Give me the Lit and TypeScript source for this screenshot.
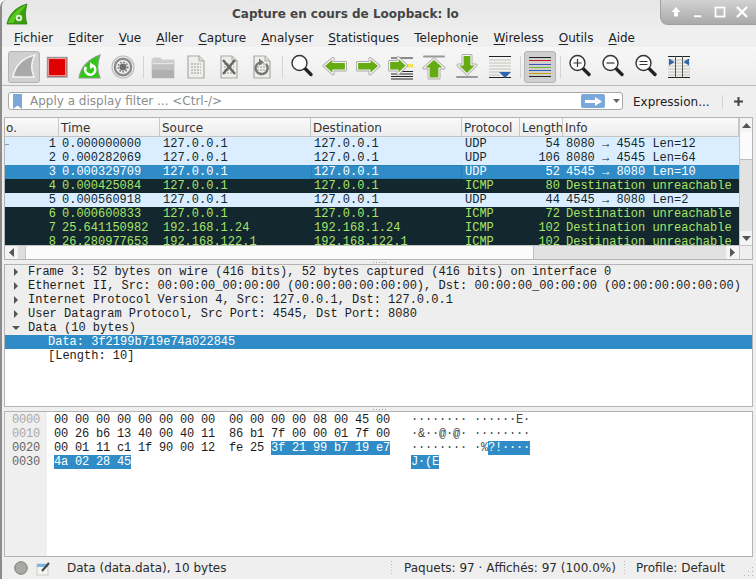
import { LitElement, css, html, svg } from 'lit';
import { customElement } from 'lit/decorators.js';

type PacketRow = [string, string, string, string, string, string, string, string];

const MENUS: [string, string, string][] = [
    ['', 'F', 'ichier'],
    ['', 'E', 'diter'],
    ['', 'V', 'ue'],
    ['', 'A', 'ller'],
    ['', 'C', 'apture'],
    ['', 'A', 'nalyser'],
    ['', 'S', 'tatistiques'],
    ['Telephon', 'i', 'e'],
    ['', 'W', 'ireless'],
    ['', 'O', 'utils'],
    ['', 'A', 'ide'],
];

const COLUMNS = ['o.', 'Time', 'Source', 'Destination', 'Protocol', 'Length', 'Info'];

const PACKETS: PacketRow[] = [
    ['light', '1', '0.000000000', '127.0.0.1', '127.0.0.1', 'UDP', '54', '8080 → 4545 Len=12'],
    ['light', '2', '0.000282069', '127.0.0.1', '127.0.0.1', 'UDP', '106', '8080 → 4545 Len=64'],
    ['selected', '3', '0.000329709', '127.0.0.1', '127.0.0.1', 'UDP', '52', '4545 → 8080 Len=10'],
    ['dark', '4', '0.000425084', '127.0.0.1', '127.0.0.1', 'ICMP', '80', 'Destination unreachable'],
    ['light', '5', '0.000560918', '127.0.0.1', '127.0.0.1', 'UDP', '44', '4545 → 8080 Len=2'],
    ['dark', '6', '0.000600833', '127.0.0.1', '127.0.0.1', 'ICMP', '72', 'Destination unreachable'],
    ['dark', '7', '25.641150982', '192.168.1.24', '192.168.1.24', 'ICMP', '102', 'Destination unreachable'],
    ['dark', '8', '26.280977653', '192.168.122.1', '192.168.122.1', 'ICMP', '102', 'Destination unreachable'],
];

const DETAILS: [string, string][] = [
    ['closed', 'Frame 3: 52 bytes on wire (416 bits), 52 bytes captured (416 bits) on interface 0'],
    ['closed', 'Ethernet II, Src: 00:00:00_00:00:00 (00:00:00:00:00:00), Dst: 00:00:00_00:00:00 (00:00:00:00:00:00)'],
    ['closed', 'Internet Protocol Version 4, Src: 127.0.0.1, Dst: 127.0.0.1'],
    ['closed', 'User Datagram Protocol, Src Port: 4545, Dst Port: 8080'],
    ['open', 'Data (10 bytes)'],
];

const page = (extra = svg``) => svg`
    <path d="M4 1H15L20 6V23H4Z" fill="#eeeeea" stroke="#aaa" stroke-width="1.2"/>
    <path d="M15 1V6H20" fill="#ddd" stroke="#aaa"/>
    <path d="M7 9H17M7 12H17M7 15H17M7 18H17" stroke="#b4b4b4" stroke-width="1.6" stroke-dasharray="2 1"/>
    ${extra}`;

const greenShape = (d: string) => svg`
    <path d=${d} fill="none" stroke="#a9a9a9" stroke-width="3" stroke-linejoin="round"/>
    <path d=${d} fill="#66ab14" stroke="#f4f4f4" stroke-width="1.2" stroke-linejoin="round"/>`;

// magnifier sits a little above the centre of its box
const lens = (inner = svg``) => svg`
    <g transform="translate(0 -1.500)">
        <path d="M14 14L21 21" stroke="#222" stroke-width="3.4" stroke-linecap="round"/>
        <circle cx="9.5" cy="9.5" r="7.5" fill="#fbfbfb" stroke="#333" stroke-width="1.4"/>
        ${inner}
    </g>`;

const ICONS = {
    fin: svg`<path d="M1 22C3 11 11 3 23 0C19 7 19 15 22 22Z" fill="#a9a9a9" stroke="#f2f2f2" stroke-width="1.6"/>`,
    stop: svg`<rect x="2.5" y="2.5" width="19.5" height="19.5" fill="#e00000" stroke="#999" stroke-width="1.4"/>
        <rect x="3.7" y="3.7" width="17" height="17" fill="none" stroke="#f3dada" stroke-width=".7"/>`,
    restart: svg`<path d="M1 23C3 12 11 4 22 0C19 8 19 16 22 23Z" fill="#2fc813" stroke="#8a9a88" stroke-width="1.2"/>
        <path d="M15 10.5A5 5 0 1 1 8 12" fill="none" stroke="#fff" stroke-width="2.6"/>
        <path d="M12 7L17 11L12 14Z" fill="#fff"/>`,
    options: svg`<circle cx="12" cy="12" r="11" fill="#f6f6f6" stroke="#bbb" stroke-width="1.2"/>
        <circle cx="12" cy="12" r="8.2" fill="#f0f0f0" stroke="#8a8a8a" stroke-width="2.4"/>
        <circle cx="12" cy="12" r="3.6" fill="#6f6f6f"/>
        <circle cx="12" cy="12" r="4.8" fill="none" stroke="#6f6f6f" stroke-width="1.4" stroke-dasharray="1.6 1.6"/>`,
    folder: svg`<path d="M1 5C1 4 2 3 3 3H9L11 5H23V23H1Z" fill="#cdcdcd" stroke="#d0d0d0"/>
        <rect x="1" y="8" width="22" height="8" fill="#c0c0c0"/>
        <rect x="1" y="15" width="22" height="8" fill="#b0b0b0"/>
        <rect x="1.5" y="8" width="21" height="1.2" fill="#e6e6e6"/>`,
    file: page(),
    close: page(svg`<path d="M6 5L18 19M18 5L6 19" stroke="#666" stroke-width="2.4"/>`),
    reload: page(svg`<path d="M16 9A6 6 0 1 1 9.5 7.5" fill="none" stroke="#777" stroke-width="2.4"/><path d="M9 3.5L14 7.5L9 10.5Z" fill="#777"/>`),
    search: lens(),
    back: greenShape('M1 11L10 3.5V7.5H22.5V15H10V19Z'),
    forward: greenShape('M23 11L14 3.5V7.5H1.5V15H14V19Z'),
    goto: svg`<path d="M2 3H24M2 19H24M2 21.5H24M2 24H24M10 16.5H24" stroke="#222" stroke-width="1"/>
        <rect x="16" y="9" width="8" height="3.5" fill="#f4e84e"/>
        ${greenShape('M17.5 10.5L9 2.5V6.5H0.5V15H9V19Z')}`,
    first: svg`<path d="M2 1.5H22" stroke="#999" stroke-width="2" stroke-linecap="round"/>
        ${greenShape('M12 4L22 13H17V23H7V13H2Z')}`,
    last: svg`<path d="M2 22H22" stroke="#999" stroke-width="2" stroke-linecap="round"/>
        ${greenShape('M12 19L21 10H16V0.5H8V10H3Z')}`,
    autoscroll: svg`<path d="M1 1.5H23M1 22.5H23" stroke="#222" stroke-width="1.2"/>
        <path d="M1 5H23M1 8H23M1 11H23M1 14H23M1 17H23M1 20H12" stroke="#c2c2b8" stroke-width="1"/>
        <path d="M11 17H23L17 23Z" fill="#2c66ac"/>`,
    colorize: svg`<path d="M1 2.500H23" stroke="#222"/><path d="M1 5.500H23" stroke="#c62020"/>
        <path d="M1 9.500H23" stroke="#3c57b5"/><path d="M1 12.500H23" stroke="#6fb52c"/>
        <path d="M1 15.500H23" stroke="#2b62b8"/><path d="M1 18.500H23" stroke="#c9a000"/>
        <path d="M1 21.500H23" stroke="#222"/>`,
    zoomIn: lens(svg`<path d="M5.500 9.500H13.500M9.500 5.500V13.500" stroke="#333" stroke-width="1.2"/>`),
    zoomOut: lens(svg`<path d="M5.500 9.500H13.500" stroke="#333" stroke-width="1.2"/>`),
    zoomReset: lens(svg`<path d="M5.500 8H13.500M5.500 11H13.500" stroke="#333" stroke-width="1.2"/>`),
    resize: svg`<path d="M1 1.500H23M1 22.500H23" stroke="#222" stroke-width="1.2"/>
        <path d="M1 5H23M1 8H23M1 11H23M1 14H23M1 17H23M1 20H23" stroke="#c2c2b8"/>
        <path d="M8.500 1V23M15.500 1V23" stroke="#555"/>
        <path d="M2 3.500L7.500 7L2 10.500Z" fill="#2c66ac"/><path d="M22 3.500L16.500 7L22 10.500Z" fill="#2c66ac"/>`,
};

type IconName = keyof typeof ICONS;

const TOOL_GROUPS: { name: IconName; active?: boolean }[][] = [
    [{ name: 'fin', active: true }, { name: 'stop' }, { name: 'restart' }, { name: 'options' }],
    [{ name: 'folder' }, { name: 'file' }, { name: 'close' }, { name: 'reload' }],
    [{ name: 'search' }, { name: 'back' }, { name: 'forward' }, { name: 'goto' }, { name: 'first' }, { name: 'last' }, { name: 'autoscroll' }],
    [{ name: 'colorize', active: true }],
    [{ name: 'zoomIn' }, { name: 'zoomOut' }, { name: 'zoomReset' }, { name: 'resize' }],
];

const HEX: [string, string, string, string, string, string][] = [
    ['0000', '00 00 00 00 00 00 00 00  00 00 00 00 08 00 45 00', '', '········ ······E·', '', 'dim'],
    ['0010', '00 26 b6 13 40 00 40 11  86 b1 7f 00 00 01 7f 00', '', '·&··@·@· ········', '', 'dim'],
    ['0020', '00 01 11 c1 1f 90 00 12  fe 25 ', '3f 21 99 b7 19 e7', '········ ·%', '?!····', ''],
    ['0030', '', '4a 02 28 45', '', 'J·(E', ''],
];

@customElement('app-root')
export class AppRoot extends LitElement {
    static override styles = css`
        :host {
            display: block;
            width: 756px;
            height: 579px;
            overflow: hidden;
            font-family: 'DejaVu Sans', sans-serif;
            font-size: 12px;
            color: #2c2c2c;
        }
        .window {
            box-sizing: border-box;
            width: 756px;
            height: 579px;
            display: flex;
            flex-direction: column;
            background: #efefef;
            border-left: 2px solid #8c8c8c;
            border-top-left-radius: 7px;
            overflow: hidden;
        }

        /* title bar */
        .titlebar {
            height: 27px;
            flex: none;
            display: flex;
            align-items: flex-start;
            background: linear-gradient(#e6e6e6, #ececec);
        }
        .logo {
            width: 22px;
            height: 22px;
            margin: 3px 0 0 4px;
            flex: none;
        }
        .title {
            margin: 7px 0 0 204px;
            flex: 1;
            font-weight: 700;
            font-size: 12px;
            color: #454545;
            white-space: nowrap;
        }
        .winctl {
            width: 96px;
            height: 25px;
            flex: none;
            display: flex;
            align-items: center;
            padding-left: 7px;
            gap: 6px;
            box-sizing: border-box;
            background: linear-gradient(#d2d2d2, #a9a9a9);
            border-bottom-left-radius: 8px;
            border: 1px solid #a0a0a0;
            border-width: 0 0 1px 1px;
        }
        .winctl svg { width: 16px; height: 16px; flex: none; }

        /* menu bar */
        .menubar {
            height: 20px;
            padding-top: 1px;
            box-sizing: border-box;
            flex: none;
            display: flex;
            gap: 15px;
            padding-left: 12px;
            align-items: center;
            color: #222;
            background: #efefef;
        }
        .menubar u { text-underline-offset: 2px; text-decoration-thickness: 1px; }

        /* toolbar */
        .toolbar {
            height: 39px;
            box-sizing: border-box;
            flex: none;
            display: flex;
            align-items: flex-start;
            padding: 4px 0 0 6px;
            background: linear-gradient(#f7f7f7, #ededed);
            border-bottom: 1px solid #b8b8b8;
        }
        .tool {
            width: 32px;
            height: 32px;
            box-sizing: border-box;
            margin-right: 1px;
            display: flex;
            align-items: center;
            justify-content: center;
            border: 1px solid transparent;
            border-radius: 3px;
        }
        .tool.active {
            background: #cfcfcf;
            border-color: #b4b4b4;
        }
        .tool svg { width: 24px; height: 24px; overflow: visible; }
        .sep {
            width: 1px;
            height: 22px;
            margin: 5px 3px 0;
            background: #d4d4d4;
            flex: none;
        }

        /* display filter */
        .filterbar {
            height: 31px;
            box-sizing: border-box;
            flex: none;
            display: flex;
            align-items: flex-start;
            padding: 6px 0 0 6px;
        }
        .filter {
            width: 615px;
            height: 18px;
            box-sizing: border-box;
            flex: none;
            display: flex;
            align-items: center;
            background: #fff;
            border: 1px solid #a8a8a8;
            border-radius: 3px;
            padding-left: 4px;
        }
        .bookmark { width: 9px; height: 15px; flex: none; }
        .placeholder {
            flex: 1;
            margin-left: 8px;
            color: #8d8d8d;
            white-space: nowrap;
        }
        .apply {
            width: 24px;
            height: 14px;
            flex: none;
            background: #7ba8d8;
            border-radius: 2px;
            display: flex;
            align-items: center;
            justify-content: center;
        }
        .combo { width: 7px; height: 4px; margin: 0 2px 0 8px; flex: none; }
        .expression { margin-left: 10px; color: #222; width: 89px; line-height: 20px; flex: none; white-space: nowrap; }
        .filterbar .sep { height: 14px; margin: 3px 0 0 0; }
        .plus { margin-left: 9px; width: 13px; height: 13px; margin-top: 3px; flex: none; }

        /* framed panes */
        .pane {
            margin: 0 3px 0 2px;
            flex: none;
            background: #fff;
            border: 1px solid #b4b4b4;
            box-sizing: border-box;
            font-family: 'Liberation Mono', monospace;
            font-size: 12px;
            overflow: hidden;
        }
        .packets {
            height: 143px;
            display: grid;
            grid-template-columns: 734px 13px;
            grid-template-rows: 19px 108px 14px;
        }
        .head {
            grid-column: 1;
            grid-row: 1;
            display: grid;
            grid-template-columns: 54px 101px 151px 151px 58px 43px 176px;
            font-family: 'DejaVu Sans', sans-serif;
            font-size: 12px;
            background: linear-gradient(#fafafa, #ececec);
            border-bottom: 1px solid #c4c4c4;
            box-sizing: border-box;
        }
        .head div {
            border-right: 1px solid #c8c8c8;
            padding: 3px 0 0 2px;
            overflow: hidden;
            white-space: nowrap;
            color: #333;
        }
        .head div:first-child { padding-left: 1px; }
        .rows { grid-column: 1; grid-row: 2; overflow: hidden; }
        .row {
            height: 14px;
            line-height: 14px;
            display: grid;
            grid-template-columns: 54px 101px 151px 151px 58px 43px 176px;
            white-space: pre;
        }
        .row.light { background: #daeeff; color: #12272e; }
        .row.dark { background: #12272e; color: #a8e468; }
        .row.selected { background: #308cc6; color: #fff; }
        .row div { padding-left: 3px; overflow: hidden; }
        .row .num { padding: 0 3px 0 0; text-align: right; position: relative; }
        .row .focus { box-shadow: inset 0 0 0 1px #2a7cb2; }
        .tick {
            position: absolute;
            left: 0;
            top: 7px;
            width: 4px;
            height: 1px;
            background: #8c9aa2;
        }

        .vbar {
            grid-column: 2;
            grid-row: 1 / 3;
            background: #e2e2e2;
            border-left: 1px solid #c4c4c4;
            display: flex;
            flex-direction: column;
        }
        .vbar .btn { height: 14px; flex: none; background: #f4f4f4; display: flex; align-items: center; justify-content: center; }
        .vbar .thumb { height: 27px; flex: none; background: #fbfbfb; border-bottom: 1px solid #bdbdbd; }
        .vbar .track { flex: 1; }
        .hbar {
            grid-column: 1;
            grid-row: 3;
            display: flex;
            background: #e2e2e2;
            border-top: 1px solid #c4c4c4;
            box-sizing: border-box;
        }
        .hbar .btn { width: 13px; flex: none; background: #f4f4f4; display: flex; align-items: center; justify-content: center; }
        .hbar .stub { width: 7px; flex: none; background: #dedede; border-right: 1px solid #c4c4c4; }
        .hbar .thumb { width: 507px; flex: none; background: #fbfbfb; border-right: 1px solid #bdbdbd; }
        .hbar .track { flex: 1; }
        .corner { grid-column: 2; grid-row: 3; background: #efefef; border-top: 1px solid #c4c4c4; border-left: 1px solid #c4c4c4; }

        .grip {
            height: 4px;
            flex: none;
            display: flex;
            justify-content: center;
            align-items: center;
        }
        .grip span {
            width: 13px;
            height: 1px;
            background: repeating-linear-gradient(90deg, #a0a0a0 0 1px, transparent 1px 3px);
        }

        .details { height: 143px; }
        .node {
            height: 14px;
            line-height: 14px;
            padding-left: 23px;
            white-space: nowrap;
            overflow: hidden;
            background: #eeeeee;
            position: relative;
            color: #1c1c1c;
        }
        .leaf { background: #fff; padding-left: 43px; }
        .leaf.selected { background: #308cc6; color: #fff; }
        .arrow { position: absolute; left: 7px; top: 3px; width: 8px; height: 8px; }

        .bytes {
            height: 146px;
            display: flex;
            color: #1c1c1c;
            letter-spacing: -0.2px;
        }
        .gutter {
            width: 42px;
            flex: none;
            background: #efefef;
            padding: 1px 0 0 7px;
            box-sizing: border-box;
        }
        .gutter div { height: 14px; line-height: 14px; color: #666; }
        .gutter div.dim { color: #aaa; }
        .dump { padding: 1px 0 0 7px; flex: 1; }
        .line { height: 14px; line-height: 14px; display: flex; white-space: pre; }
        .hex { width: 357px; flex: none; }
        .mark { background: #308cc6; color: #fff; }
        .ascii { color: #444; }

        /* status bar */
        .status {
            flex: 1;
            display: flex;
            align-items: center;
            position: relative;
            color: #2c2c2c;
        }
        .led { width: 14px; height: 14px; margin-left: 12px; flex: none; }
        .note { width: 15px; height: 15px; margin-left: 8px; flex: none; }
        .field { margin-left: 16px; width: 324px; flex: none; white-space: nowrap; }
        .dots {
            width: 1px;
            height: 14px;
            flex: none;
            background: repeating-linear-gradient(#bdbdbd 0 1px, transparent 1px 3px);
        }
        .counts { margin: 0 8px 0 12px; width: 212px; flex: none; white-space: nowrap; }
        .profile { margin-left: 11px; white-space: nowrap; }
        .sizegrip { position: absolute; right: 2px; bottom: 2px; width: 11px; height: 11px; }
    `;

    private _renderMenu() {
        return MENUS.map(([before, key, after]) => html`<span>${before}<u>${key}</u>${after}</span>`);
    }

    private _renderToolbar() {
        return TOOL_GROUPS.map((group, index) => html`
            ${index > 0 ? html`<div class="sep"></div>` : ''}
            ${group.map(tool => html`
                <div class="tool ${tool.active ? 'active' : ''}">
                    <svg viewBox="0 0 24 24">${ICONS[tool.name]}</svg>
                </div>
            `)}
        `);
    }

    private _renderPacket(row: PacketRow, index: number) {
        const [kind, no, time, src, dst, proto, len, info] = row;
        return html`
            <div class="row ${kind}">
                <div class="num">${index === 0 ? html`<span class="tick"></span>` : ''}${no}</div>
                <div>${time}</div>
                <div>${src}</div>
                <div class=${kind === 'selected' ? 'focus' : ''}>${dst}</div>
                <div>${proto}</div>
                <div class="num">${len}</div>
                <div>${info}</div>
            </div>
        `;
    }

    override render() {
        return html`
            <div class="window">
                <div class="titlebar">
                    <svg class="logo" viewBox="0 0 22 22">
                        <path d="M1 21C3 11 10 4 21 1C19 8 19 15 21 21Z" fill="#3a9f10" stroke="#2d7c10" stroke-width=".8"/>
                        <path d="M2 20C5 12 11 6 20 2C18 6 13 10 7 20Z" fill="#56c81e"/>
                        <circle cx="13" cy="15" r="3.200" fill="#dff3d2"/>
                        <circle cx="13" cy="15" r="1.300" fill="#3a9f10"/>
                    </svg>
                    <div class="title">Capture en cours de Loopback: lo</div>
                    <div class="winctl">
                        <svg viewBox="0 0 16 16"><path d="M8 3L12.500 8H10V12.500H6V8H3.500Z" fill="#fff"/></svg>
                        <svg viewBox="0 0 16 16"><rect x="3.500" y="11" width="8" height="2.500" fill="#fff" stroke="#999" stroke-width=".4"/></svg>
                        <svg viewBox="0 0 16 16"><rect x="3.500" y="3.500" width="9" height="9" fill="none" stroke="#fff" stroke-width="1.800"/></svg>
                        <svg viewBox="0 0 16 16"><path d="M3 3L13 13M13 3L3 13" stroke="#fff" stroke-width="2.400"/></svg>
                    </div>
                </div>

                <div class="menubar">${this._renderMenu()}</div>
                <div class="toolbar">${this._renderToolbar()}</div>

                <div class="filterbar">
                    <div class="filter">
                        <svg class="bookmark" viewBox="0 0 9 15"><path d="M0 0H9V15L4.500 11.500L0 15Z" fill="#7ba8d8"/></svg>
                        <span class="placeholder">Apply a display filter ... &lt;Ctrl-/&gt;</span>
                        <div class="apply">
                            <svg width="17" height="9" viewBox="0 0 17 9"><path d="M0 3H10V0L17 4.500L10 9V6H0Z" fill="#fff"/></svg>
                        </div>
                        <svg class="combo" viewBox="0 0 7 4"><path d="M0 0H7L3.500 4Z" fill="#666"/></svg>
                    </div>
                    <span class="expression">Expression...</span>
                    <div class="sep"></div>
                    <svg class="plus" viewBox="0 0 13 13"><path d="M6.500 2V11M2 6.500H11" stroke="#444" stroke-width="2"/></svg>
                </div>

                <div class="pane packets">
                    <div class="head">${COLUMNS.map(c => html`<div>${c}</div>`)}</div>
                    <div class="vbar">
                        <div class="btn"><svg width="9" height="5" viewBox="0 0 9 5"><path d="M0 5H9L4.500 0Z" fill="#555"/></svg></div>
                        <div class="thumb"></div>
                        <div class="track"></div>
                        <div class="btn"><svg width="9" height="5" viewBox="0 0 9 5"><path d="M0 0H9L4.500 5Z" fill="#555"/></svg></div>
                    </div>
                    <div class="rows">${PACKETS.map((row, i) => this._renderPacket(row, i))}</div>
                    <div class="hbar">
                        <div class="btn"><svg width="5" height="9" viewBox="0 0 5 9"><path d="M5 0V9L0 4.500Z" fill="#555"/></svg></div>
                        <div class="stub"></div>
                        <div class="thumb"></div>
                        <div class="track"></div>
                        <div class="btn"><svg width="5" height="9" viewBox="0 0 5 9"><path d="M0 0V9L5 4.500Z" fill="#555"/></svg></div>
                    </div>
                    <div class="corner"></div>
                </div>

                <div class="grip"><span></span></div>

                <div class="pane details">
                    ${DETAILS.map(([state, text]) => html`
                        <div class="node">
                            <svg class="arrow" viewBox="0 0 8 8">
                                ${state === 'open'
                                    ? svg`<path d="M0 2H8L4 6Z" fill="#555"/>`
                                    : svg`<path d="M2 0V8L6 4Z" fill="#555"/>`}
                            </svg>${text}
                        </div>
                    `)}
                    <div class="node leaf selected">Data: 3f2199b719e74a022845</div>
                    <div class="node leaf">[Length: 10]</div>
                </div>

                <div class="grip"><span></span></div>

                <div class="pane bytes">
                    <div class="gutter">
                        ${HEX.map(line => html`<div class=${line[5]}>${line[0]}</div>`)}
                    </div>
                    <div class="dump">
                        ${HEX.map(line => html`
                            <div class="line">
                                <span class="hex">${line[1]}${line[2] ? html`<span class="mark">${line[2]}</span>` : ''}</span>
                                <span class="ascii">${line[3]}${line[4] ? html`<span class="mark">${line[4]}</span>` : ''}</span>
                            </div>
                        `)}
                    </div>
                </div>

                <div class="status">
                    <svg class="led" viewBox="0 0 14 14">
                        <circle cx="7" cy="7" r="6.300" fill="#a8a8a4" stroke="#7c7c7c" stroke-width="1"/>
                    </svg>
                    <svg class="note" viewBox="0 0 15 15">
                        <rect x="1" y="3" width="11" height="11" fill="#f4f4f0" stroke="#c4c4c4" stroke-width=".8"/>
                        <rect x="1" y="3" width="11" height="3" fill="#7cb4e4"/>
                        <path d="M6 10L13 2" stroke="#444" stroke-width="2"/>
                    </svg>
                    <span class="field">Data (data.data), 10 bytes</span>
                    <div class="dots"></div>
                    <span class="counts">Paquets: 97 · Affichés: 97 (100.0%)</span>
                    <div class="dots"></div>
                    <span class="profile">Profile: Default</span>
                    <svg class="sizegrip" viewBox="0 0 11 11">
                        <path d="M9 1h1v1H9zM9 5h1v1H9zM9 9h1v1H9zM5 5h1v1H5zM5 9h1v1H5zM1 9h1v1H1z" fill="#b0b0b0"/>
                    </svg>
                </div>
            </div>
        `;
    }
}
